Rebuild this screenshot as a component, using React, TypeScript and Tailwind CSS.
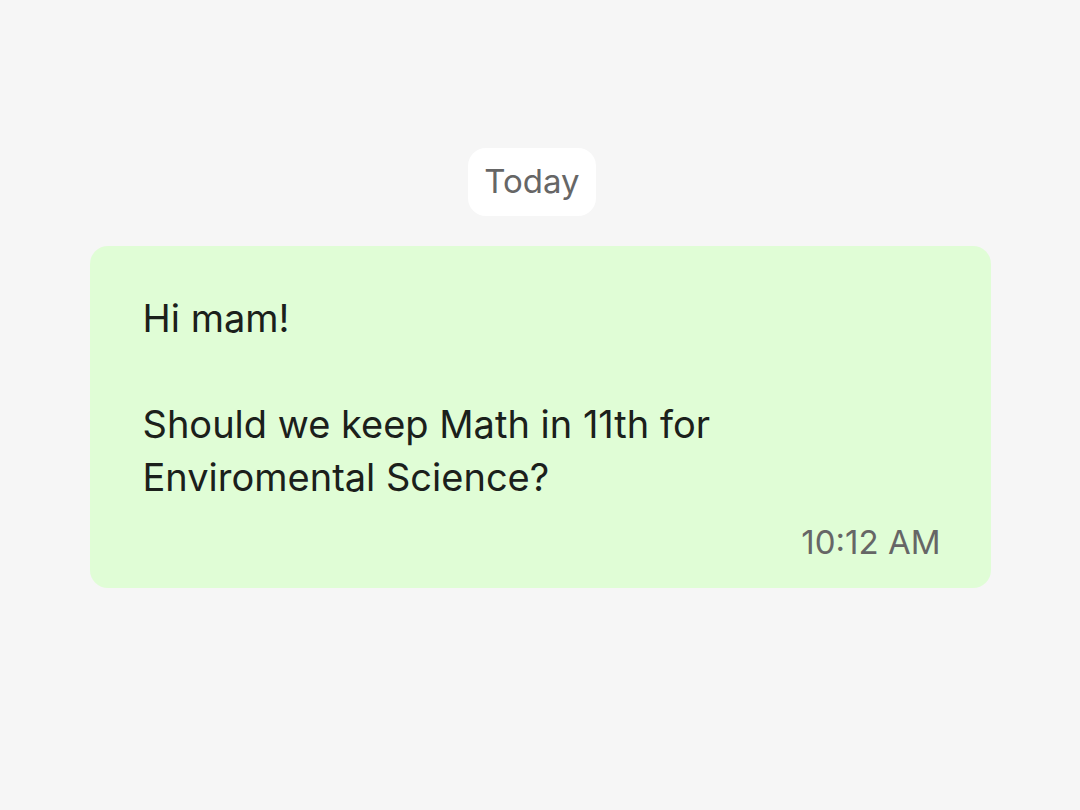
export default function App() {
  return (
    <div
      className="flex min-h-[810px] w-full flex-col items-center bg-[#f6f6f6] pt-[148px]"
      style={{ fontFamily: "Inter, 'Noto Sans', sans-serif" }}
    >
      {/* date chip, sits a bit left of centre in the original */}
      <div className="mr-[16px] flex h-[68px] items-center rounded-[18px] bg-white px-[16px] text-[33px] text-[#666666]">
        Today
      </div>

      {/* message bubble */}
      <div className="mt-[30px] flex w-[901px] flex-col rounded-[18px] bg-[#e0fdd6] pb-[26px] pl-[53px] pr-[50px] pt-[46px]">
        <p className="whitespace-pre-line text-[38px] leading-[53px] text-[#1b201b]">
          {"Hi mam!\n\nShould we keep Math in 11th for\nEnviromental Science?"}
        </p>
        <div className="mt-[18px] self-end text-[33px] leading-[40px] text-[#666666]">
          10:12 AM
        </div>
      </div>
    </div>
  );
}
